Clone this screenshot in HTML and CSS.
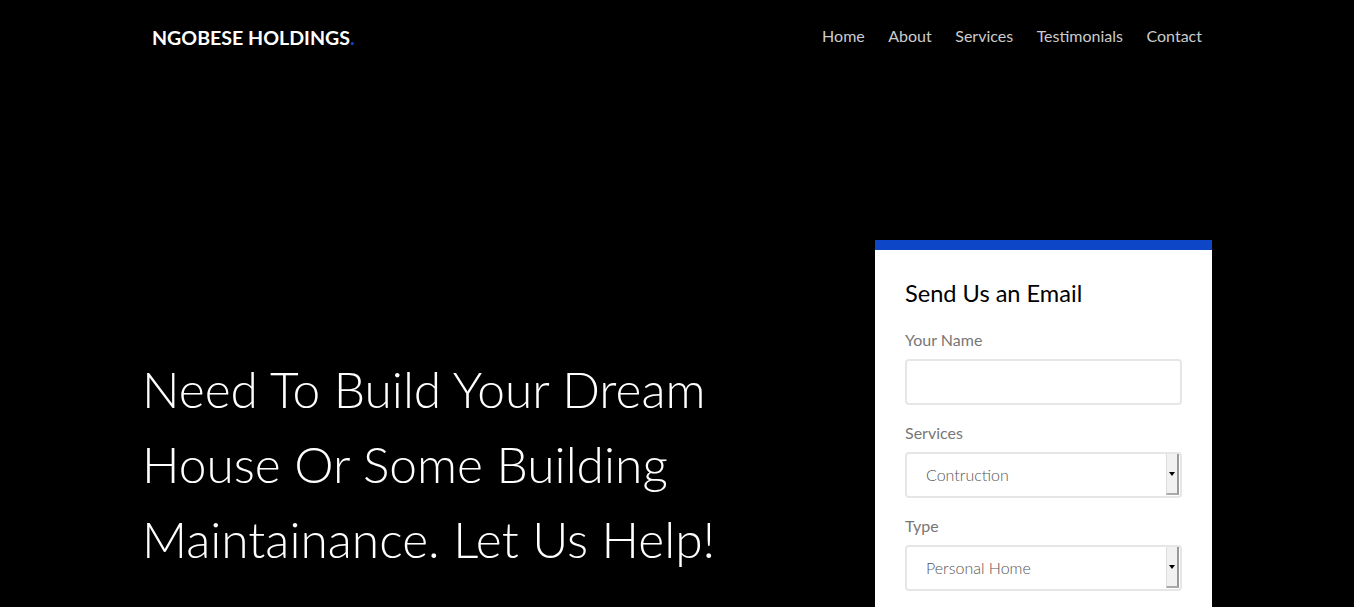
FILE: index.html
```html
<!DOCTYPE html>
<html lang="en">
<head>
<meta charset="utf-8">
<title>Ngobese Holdings</title>
<link rel="stylesheet" href="styles.css">
</head>
<body>
<header class="navbar">
  <div class="container nav-inner">
    <a class="brand" href="#">NGOBESE HOLDINGS<span class="dot">.</span></a>
    <nav class="nav-links">
      <a href="#">Home</a>
      <a href="#">About</a>
      <a href="#">Services</a>
      <a href="#">Testimonials</a>
      <a href="#">Contact</a>
    </nav>
  </div>
</header>
<section class="hero">
  <div class="container hero-inner">
    <div class="hero-text">
      <h1>Need To Build Your Dream House Or Some Building Maintainance. Let Us Help!</h1>
    </div>
    <form class="card">
      <h2>Send Us an Email</h2>
      <label class="label" for="name">Your Name</label>
      <input class="field" id="name" type="text">
      <label class="label" for="services">Services</label>
      <div class="select-box">
        <select class="select" id="services"><option>Contruction</option></select>
        <span class="select-btn"><span class="tri"></span></span>
      </div>
      <label class="label" for="type">Type</label>
      <div class="select-box">
        <select class="select" id="type"><option>Personal Home</option></select>
        <span class="select-btn"><span class="tri"></span></span>
      </div>
    </form>
  </div>
</section>
</body>
</html>
```
FILE: styles.css
```css
* { box-sizing: border-box; }
html, body { margin: 0; padding: 0; background: #000; }
body { font-family: Lato, "Open Sans", sans-serif; color: #fff; }
.container { width: 1070px; margin: 0 auto; }
.navbar { height: 74px; }
.nav-inner { display: flex; justify-content: space-between; align-items: center; height: 74px; padding: 0 0 0 10px; }
.brand { color: #fff; text-decoration: none; font-weight: 700; font-size: 19.6px; }
.dot { color: #0d47c8; }
.nav-links { display: flex; gap: 23.5px; padding-right: 10px; margin-top: -3px; }
.nav-links a { color: #cccccc; text-decoration: none; font-size: 16px; }
.hero-inner { display: flex; justify-content: space-between; align-items: flex-start; padding-top: 166px; }
.hero-text { width: 600px; padding-top: 112px; }
h1 { margin: 0; font-weight: 300; font-size: 49.7px; line-height: 75px; }
.card { width: 337px; background: #fff; border-top: 10px solid #0d47c8; padding: 29px 30px 30px; display: flex; flex-direction: column; }
h2 { margin: 0 0 22px; color: #000; font-weight: 400; font-size: 23.6px; line-height: 29px; }
.label { color: #777; font-size: 16px; line-height: 20px; margin-bottom: 9px; }
.field { height: 46px; border: 2px solid #e6e6e6; border-radius: 4px; margin-bottom: 18px; font-family: inherit; }
.select-box { display: flex; height: 46px; border: 2px solid #e6e6e6; border-radius: 4px; margin-bottom: 18px; background: #fff; }
.select { flex: 1; appearance: none; -webkit-appearance: none; border: 0; background: transparent; padding: 0 0 2px 19px; font-family: inherit; font-size: 16px; font-weight: 300; color: #555; outline: none; }
.select-btn { width: 13px; margin: 0 1px 1px 0; background: #f1f1f1; border-left: 1px solid #ddd; border-right: 2px solid #999; border-bottom: 2px solid #aaa; display: flex; align-items: center; justify-content: center; }
.tri { width: 0; height: 0; border-left: 3px solid transparent; border-right: 3px solid transparent; border-top: 4px solid #000; }
```
